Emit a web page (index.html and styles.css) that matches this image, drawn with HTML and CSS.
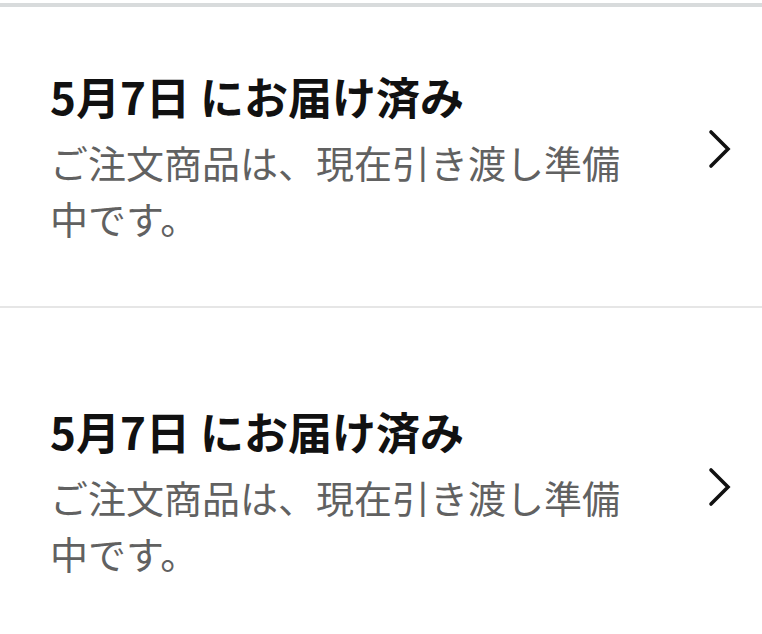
FILE: index.html
```html
<!DOCTYPE html>
<html lang="ja">
<head>
<meta charset="utf-8">
<link rel="stylesheet" href="styles.css">
</head>
<body>
<div class="topbar"></div>
<div class="item first">
  <div class="text">
    <div class="title">5月7日 にお届け済み</div>
    <div class="desc">ご注文商品は、現在引き渡し準備中です。</div>
  </div>
  <svg class="chev" width="24" height="40" viewBox="0 0 24 40"><path d="M3 3 L20 20 L3 37" fill="none" stroke="#111" stroke-width="3.6" stroke-linecap="round" stroke-linejoin="miter"/></svg>
</div>
<div class="divider"></div>
<div class="item second">
  <div class="text">
    <div class="title">5月7日 にお届け済み</div>
    <div class="desc">ご注文商品は、現在引き渡し準備中です。</div>
  </div>
  <svg class="chev" width="24" height="40" viewBox="0 0 24 40"><path d="M3 3 L20 20 L3 37" fill="none" stroke="#111" stroke-width="3.6" stroke-linecap="round" stroke-linejoin="miter"/></svg>
</div>
</body>
</html>
```
FILE: styles.css
```css
html, body {
  margin: 0;
  padding: 0;
  background: #fff;
}
body {
  font-family: "Noto Sans CJK JP", "Noto Sans", sans-serif;
  width: 762px;
  height: 634px;
  overflow: hidden;
}
.topbar {
  margin-top: 3px;
  height: 4px;
  background: #d8dbdc;
}
.item {
  display: flex;
  align-items: flex-start;
  padding: 0 30px 0 50px;
}
.item.first {
  padding-top: 63px;
  padding-bottom: 60px;
}
.item.second {
  padding-top: 97px;
}
.text {
  width: 590px;
}
.title {
  font-size: 44px;
  font-weight: 700;
  color: #111;
  line-height: 52px;
}
.desc {
  margin-top: 12px;
  font-size: 38px;
  color: #616161;
  line-height: 56px;
}
.chev {
  margin-left: auto;
  margin-top: 59px;
  flex: none;
}
.item.second .chev {
  margin-top: 62px;
}
.divider {
  height: 2px;
  background: #e6e6e6;
}
```
